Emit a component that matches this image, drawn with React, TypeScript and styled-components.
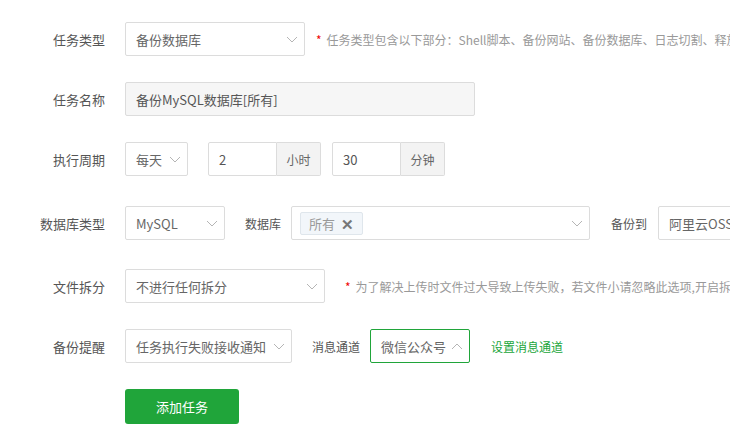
import styled, { createGlobalStyle } from 'styled-components';

const GlobalStyle = createGlobalStyle`
  html, body {
    margin: 0;
    padding: 0;
    background: #fff;
    overflow: hidden;
  }
  body {
    font-family: "Noto Sans CJK SC", "Open Sans", sans-serif;
    color: #555;
  }
`;

const green = '#20a53a';

const Form = styled.div`
  width: 730px;
  height: 442px;
  padding-top: 22px;
  box-sizing: border-box;
  overflow: hidden;
`;

const Row = styled.div<{ $top?: number }>`
  display: flex;
  align-items: center;
  height: 34px;
  margin-top: ${(p) => p.$top ?? 26}px;
  white-space: nowrap;
  &:first-child {
    margin-top: 0;
  }
`;

const Label = styled.div`
  width: 105px;
  margin-right: 20px;
  text-align: right;
  font-size: 13px;
  color: #555;
  flex-shrink: 0;
`;

const SubLabel = styled.span<{ $ml?: number; $mr?: number }>`
  font-size: 12px;
  color: #555;
  margin-left: ${(p) => p.$ml ?? 20}px;
  margin-right: ${(p) => p.$mr ?? 10}px;
  flex-shrink: 0;
`;

const SelectBox = styled.div<{ $w: number; $active?: boolean }>`
  width: ${(p) => p.$w}px;
  height: 34px;
  box-sizing: border-box;
  border: 1px solid ${(p) => (p.$active ? green : '#dcdcdc')};
  border-radius: 2px;
  display: flex;
  align-items: center;
  justify-content: space-between;
  padding: 0 6px 0 10px;
  font-size: 13px;
  color: #666;
  flex-shrink: 0;
  background: #fff;
`;

const Chevron = ({ up }: { up?: boolean }) => (
  <svg width="12" height="7" viewBox="0 0 12 7" style={{ flexShrink: 0 }}>
    <polyline
      points={up ? '1,6 6,1 11,6' : '1,1 6,6 11,1'}
      fill="none"
      stroke="#b5b5b5"
      strokeWidth="1"
    />
  </svg>
);

const TextInput = styled.div<{ $w: number; $disabled?: boolean }>`
  width: ${(p) => p.$w}px;
  height: 34px;
  box-sizing: border-box;
  border: 1px solid #dcdcdc;
  border-radius: 2px;
  background: ${(p) => (p.$disabled ? '#f6f6f6' : '#fff')};
  display: flex;
  align-items: center;
  padding: 0 10px;
  font-size: 13px;
  color: #555;
  flex-shrink: 0;
`;

const Group = styled.div<{ $ml: number }>`
  display: flex;
  margin-left: ${(p) => p.$ml}px;
  flex-shrink: 0;
  & > div:first-child {
    border-radius: 2px 0 0 2px;
  }
`;

const Addon = styled.div`
  width: 44px;
  height: 34px;
  box-sizing: border-box;
  border: 1px solid #dcdcdc;
  border-left: none;
  border-radius: 0 2px 2px 0;
  background: #f3f3f3;
  display: flex;
  align-items: center;
  justify-content: center;
  font-size: 12px;
  color: #666;
`;

const Hint = styled.span<{ $ml: number }>`
  margin-left: ${(p) => p.$ml}px;
  font-size: 12px;
  color: #999;
  white-space: nowrap;
`;

const Star = styled.span`
  color: #ef0808;
  margin-right: 5px;
`;

const Tag = styled.span`
  display: inline-flex;
  align-items: center;
  height: 23px;
  box-sizing: border-box;
  padding: 0 8px;
  border: 1px solid #dfe6ec;
  border-radius: 2px;
  background: #f2f6fa;
  font-size: 13px;
  color: #999;
  gap: 6px;
`;

const Close = styled.span`
  font-size: 15px;
  font-weight: bold;
  color: #777;
  line-height: 1;
`;

const Inline = styled.div`
  display: flex;
  align-items: center;
`;

const Link = styled.a`
  margin-left: 21px;
  font-size: 12px;
  color: ${green};
  text-decoration: none;
`;

const Button = styled.button`
  width: 114px;
  height: 35px;
  margin-left: 125px;
  margin-top: 26px;
  border: none;
  border-radius: 3px;
  background: ${green};
  color: #fff;
  font-family: inherit;
  font-size: 13px;
  display: block;
`;

export default function App() {
  return (
    <>
      <GlobalStyle />
      <Form>
        <Row>
          <Label>任务类型</Label>
          <SelectBox $w={180}>
            备份数据库
            <Chevron />
          </SelectBox>
          <Hint $ml={11}>
            <Star>*</Star>任务类型包含以下部分：Shell脚本、备份网站、备份数据库、日志切割、释放内存、访问URL
          </Hint>
        </Row>

        <Row>
          <Label>任务名称</Label>
          <TextInput $w={350} $disabled>
            备份MySQL数据库[所有]
          </TextInput>
        </Row>

        <Row>
          <Label>执行周期</Label>
          <SelectBox $w={63}>
            每天
            <Chevron />
          </SelectBox>
          <Group $ml={20}>
            <TextInput $w={69}>2</TextInput>
            <Addon>小时</Addon>
          </Group>
          <Group $ml={11}>
            <TextInput $w={69}>30</TextInput>
            <Addon>分钟</Addon>
          </Group>
        </Row>

        <Row $top={30}>
          <Label>数据库类型</Label>
          <SelectBox $w={100}>
            MySQL
            <Chevron />
          </SelectBox>
          <SubLabel>数据库</SubLabel>
          <SelectBox $w={299} style={{ paddingLeft: 8 }}>
            <Tag>
              所有 <Close>✕</Close>
            </Tag>
            <Chevron />
          </SelectBox>
          <SubLabel $ml={21} $mr={11}>备份到</SubLabel>
          <SelectBox $w={110}>
            阿里云OSS
            <Chevron />
          </SelectBox>
        </Row>

        <Row $top={29}>
          <Label>文件拆分</Label>
          <SelectBox $w={200}>
            不进行任何拆分
            <Chevron />
          </SelectBox>
          <Hint $ml={20}>
            <Star>*</Star>为了解决上传时文件过大导致上传失败，若文件小请忽略此选项,开启拆分后，文件将按设置大小拆分上传
          </Hint>
        </Row>

        <Row>
          <Label>备份提醒</Label>
          <SelectBox $w={167}>
            任务执行失败接收通知
            <Chevron />
          </SelectBox>
          <Inline>
            <SubLabel>消息通道</SubLabel>
            <SelectBox $w={100} $active>
              微信公众号
              <Chevron up />
            </SelectBox>
          </Inline>
          <Link href="#">设置消息通道</Link>
        </Row>

        <Button>添加任务</Button>
      </Form>
    </>
  );
}
